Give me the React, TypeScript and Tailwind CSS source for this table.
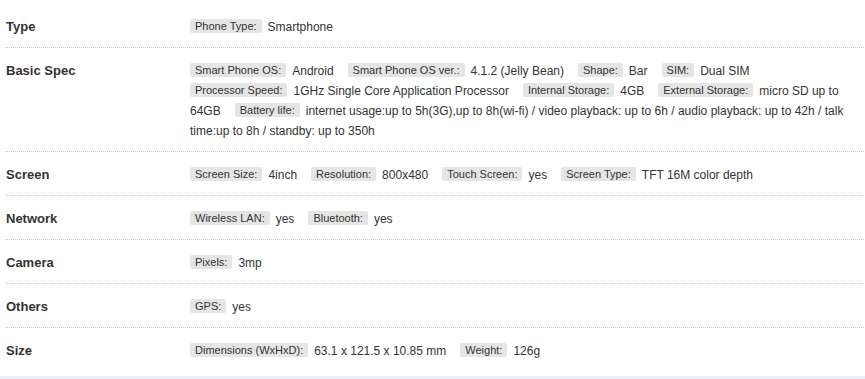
type Spec = { k: string; v: string };
type Row = { label: string; specs: Spec[] };

const rows: Row[] = [
  { label: "Type", specs: [{ k: "Phone Type", v: "Smartphone" }] },
  {
    label: "Basic Spec",
    specs: [
      { k: "Smart Phone OS", v: "Android" },
      { k: "Smart Phone OS ver.", v: "4.1.2 (Jelly Bean)" },
      { k: "Shape", v: "Bar" },
      { k: "SIM", v: "Dual SIM" },
      { k: "Processor Speed", v: "1GHz Single Core Application Processor" },
      { k: "Internal Storage", v: "4GB" },
      { k: "External Storage", v: "micro SD up to 64GB" },
      {
        k: "Battery life",
        v: "internet usage:up to 5h(3G),up to 8h(wi-fi) / video playback: up to 6h / audio playback: up to 42h / talk time:up to 8h / standby: up to 350h",
      },
    ],
  },
  {
    label: "Screen",
    specs: [
      { k: "Screen Size", v: "4inch" },
      { k: "Resolution", v: "800x480" },
      { k: "Touch Screen", v: "yes" },
      { k: "Screen Type", v: "TFT 16M color depth" },
    ],
  },
  {
    label: "Network",
    specs: [
      { k: "Wireless LAN", v: "yes" },
      { k: "Bluetooth", v: "yes" },
    ],
  },
  { label: "Camera", specs: [{ k: "Pixels", v: "3mp" }] },
  { label: "Others", specs: [{ k: "GPS", v: "yes" }] },
  {
    label: "Size",
    specs: [
      { k: "Dimensions (WxHxD)", v: "63.1 x 121.5 x 10.85 mm" },
      { k: "Weight", v: "126g" },
    ],
  },
];

function SpecRow({ row, last }: { row: Row; last: boolean }) {
  return (
    <div
      className={
        last
          ? "flex pt-[13px] pb-[15px]"
          : "flex pt-[13px] pb-[10px] border-b border-dotted border-[#c8c8c8]"
      }
    >
      <div className="w-[185px] shrink-0 pl-[1px] text-[13px] font-bold leading-[20px] text-[#333]">
        {row.label}
      </div>
      <div className="flex-1 pr-[10px] text-[12px] leading-[20px] text-[#333]">
        {row.specs.map((s) => (
          <span key={s.k}>
            <span className="inline-block rounded-[2px] bg-[#e5e5e5] px-[5px] text-[11px] leading-[14px] mr-[6px] align-[1px]">
              {s.k}:
            </span>
            <span className="mr-[14px]">{s.v}</span>
          </span>
        ))}
      </div>
    </div>
  );
}

export default function App() {
  return (
    <div className="flex flex-col w-[865px] h-[379px] overflow-hidden bg-white font-['Liberation_Sans',Arial,sans-serif]">
      <div className="pt-[4px] pl-[5px] pr-[1px]">
        {rows.map((r, i) => (
          <SpecRow key={r.label} row={r} last={i === rows.length - 1} />
        ))}
      </div>
      <div className="flex-1 bg-[#e8f0fb]" />
    </div>
  );
}
